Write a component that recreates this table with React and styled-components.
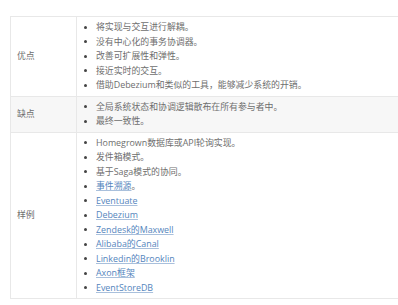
import React from 'react';
import styled, { createGlobalStyle } from 'styled-components';

const GlobalStyle = createGlobalStyle`
  html, body {
    margin: 0;
    padding: 0;
    background: #fff;
    overflow: hidden;
  }
  body {
    font-family: "Open Sans", "Noto Sans CJK SC", sans-serif;
  }
`;

const rows = [
  {
    label: '优点',
    items: [
      { text: '将实现与交互进行解耦。' },
      { text: '没有中心化的事务协调器。' },
      { text: '改善可扩展性和弹性。' },
      { text: '接近实时的交互。' },
      { text: '借助Debezium和类似的工具，能够减少系统的开销。' },
    ],
  },
  {
    label: '缺点',
    shaded: true,
    items: [
      { text: '全局系统状态和协调逻辑散布在所有参与者中。' },
      { text: '最终一致性。' },
    ],
  },
  {
    label: '样例',
    items: [
      { text: 'Homegrown数据库或API轮询实现。' },
      { text: '发件箱模式。' },
      { text: '基于Saga模式的协同。' },
      { link: '事件溯源', after: '。' },
      { link: 'Eventuate' },
      { link: 'Debezium' },
      { link: 'Zendesk的Maxwell' },
      { link: 'Alibaba的Canal' },
      { link: 'Linkedin的Brooklin' },
      { link: 'Axon框架' },
      { link: 'EventStoreDB' },
    ],
  },
];

const Page = styled.div`
  padding: 16px 0 0 10px;
`;

const Table = styled.table`
  width: 400px;
  border-collapse: collapse;
  font-size: 8.9px;
  line-height: 14.5px;
  color: #6e6e6e;
`;

const Row = styled.tr`
  background: ${(p) => (p.$shaded ? '#f7f7f7' : '#fff')};
`;

const LabelCell = styled.td`
  width: 59px;
  padding: 3px 0 3px 6px;
  border: 1px solid #e8e8e8;
  vertical-align: middle;
`;

const ItemsCell = styled.td`
  padding: 3px 0 3px 7px;
  border: 1px solid #e8e8e8;
  vertical-align: top;
`;

const List = styled.ul`
  list-style: none;
  margin: 0;
  padding: 0;
`;

const Item = styled.li`
  display: flex;
  align-items: center;
  white-space: nowrap;

  &::before {
    content: '';
    flex: none;
    width: 3px;
    height: 3px;
    border-radius: 50%;
    background: #444;
    margin-right: 9px;
  }
`;

const Link = styled.a`
  color: #5485bd;
  text-decoration: underline;
  text-decoration-color: #a9c0dc;
  text-underline-offset: 1px;
`;

const App = () => {
  return (
    <Page>
      <GlobalStyle />
      <Table>
        <tbody>
          {rows.map((row) => (
            <Row key={row.label} $shaded={row.shaded}>
              <LabelCell>{row.label}</LabelCell>
              <ItemsCell>
                <List>
                  {row.items.map((item, i) => (
                    <Item key={i}>
                      {item.link ? (
                        <span>
                          <Link href="#">{item.link}</Link>
                          {item.after}
                        </span>
                      ) : (
                        item.text
                      )}
                    </Item>
                  ))}
                </List>
              </ItemsCell>
            </Row>
          ))}
        </tbody>
      </Table>
    </Page>
  );
};

export default App;
